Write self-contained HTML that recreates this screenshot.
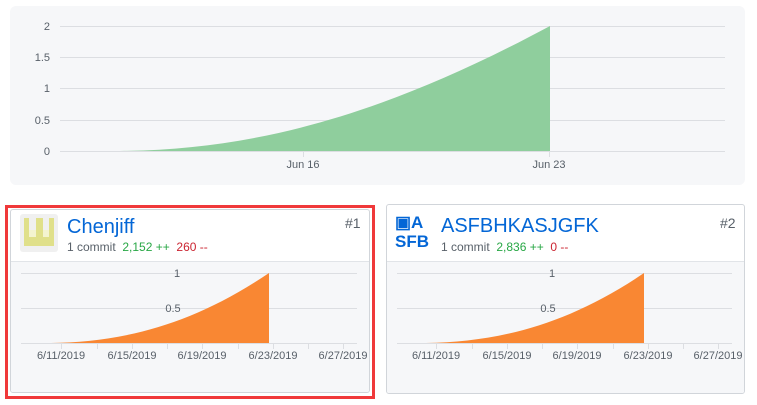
<!DOCTYPE html>
<html><head><meta charset="utf-8"><style>
body{margin:0;width:757px;height:405px;background:#fff;font-family:"Liberation Sans",sans-serif;position:relative;overflow:hidden}
.abs{position:absolute}
.card{position:absolute;border:1px solid #d1d5da;border-radius:3px;background:#fff;overflow:hidden}
.name{position:absolute;font-size:20px;color:#0366d6}
.stats{position:absolute;font-size:12px;color:#586069;white-space:nowrap}
.g{color:#28a745}.r{color:#cb2431}
.rank{position:absolute;font-size:14px;color:#586069}
</style></head><body>
<div class="abs" style="left:10px;top:6px;width:735px;height:179px;background:#f6f7f9;border-radius:6px"></div>
<svg class="abs" style="left:0;top:0" width="757" height="190" font-family="Liberation Sans, sans-serif" font-size="11" fill="#586069">
<g stroke="#dcdee2" stroke-width="1">
<line x1="60" y1="26.5" x2="725" y2="26.5"/><line x1="60" y1="57.5" x2="725" y2="57.5"/><line x1="60" y1="88.5" x2="725" y2="88.5"/><line x1="60" y1="120.5" x2="725" y2="120.5"/><line x1="60" y1="151.5" x2="725" y2="151.5"/>
<line x1="303.5" y1="151" x2="303.5" y2="157"/><line x1="549.5" y1="151" x2="549.5" y2="157"/>
</g>
<path d="M120,151 C260,150 390,112 550,26 L550,151 Z" fill="#8fce9d"/>
<g text-anchor="end"><text x="50" y="30">2</text><text x="50" y="61">1.5</text><text x="50" y="92">1</text><text x="50" y="124">0.5</text><text x="50" y="155">0</text></g>
<g text-anchor="middle"><text x="303" y="168">Jun 16</text><text x="549" y="168">Jun 23</text></g>
</svg>

<div class="abs" style="left:5px;top:205px;width:364px;height:188px;border:3px solid #f0393a"></div>
<div class="card" style="left:10px;top:209px;width:358px;height:182px">
<div style="position:absolute;left:0;top:51px;width:100%;height:131px;background:#f6f7f9;border-top:1px solid #e1e4e8"></div>
<div style="position:absolute;left:9px;top:4px;width:38px;height:38px;background:#f0f0f0;border-radius:3px">
<svg width="38" height="38"><g fill="#e0e08a"><rect x="4" y="4" width="5" height="12"/><rect x="16" y="4" width="7" height="12"/><rect x="29" y="4" width="5" height="12"/><rect x="4" y="16" width="30" height="16"/></g><g fill="#f4f4d0"><rect x="9" y="16" width="7" height="7"/><rect x="23" y="16" width="6" height="7"/></g></svg></div>
<div class="name" style="left:56px;top:6px">Chenjiff</div>
<div class="stats" style="left:56px;top:30px">1 commit &nbsp;<span class="g">2,152 ++</span> &nbsp;<span class="r">260 --</span></div>
<div class="rank" style="left:334px;top:5px">#1</div>
<svg class="abs" style="left:0;top:46px" width="356" height="110" viewBox="10 0 356 110" font-family="Liberation Sans, sans-serif" font-size="11" fill="#586069">
<g stroke="#dcdee2">
<line x1="20" y1="17.5" x2="356" y2="17.5"/><line x1="20" y1="52.5" x2="356" y2="52.5"/><line x1="20" y1="87.5" x2="356" y2="87.5"/>
<path d="M60.5,87v6M96.5,87v6M131.5,87v6M166.5,87v6M201.5,87v6M237.5,87v6M272.5,87v6M307.5,87v6M342.5,87v6"/>
</g>
<path d="M50,87 C120,86 190,70 268,17 L268,87 Z" fill="#f98733"/>
<g text-anchor="middle"><text x="176" y="21">1</text><text x="172" y="56">0.5</text>
<text x="60" y="103">6/11/2019</text><text x="131" y="103">6/15/2019</text><text x="201" y="103">6/19/2019</text><text x="272" y="103">6/23/2019</text><text x="342" y="103">6/27/2019</text></g>
</svg>
</div>
<div class="card" style="left:386px;top:204px;width:357px;height:188px">
<div style="position:absolute;left:0;top:56px;width:100%;height:132px;background:#f6f7f9;border-top:1px solid #e1e4e8"></div>
<div style="position:absolute;left:8px;top:8px;font-size:17px;font-weight:bold;color:#0366d6;line-height:19px;width:40px">&#9635;A<br>SFB</div>
<div class="name" style="left:54px;top:10px">ASFBHKASJGFK</div>
<div class="stats" style="left:54px;top:35px">1 commit &nbsp;<span class="g">2,836 ++</span> &nbsp;<span class="r">0 --</span></div>
<div class="rank" style="left:333px;top:10px">#2</div>
<svg class="abs" style="left:0;top:51px" width="355" height="110" viewBox="387 0 355 110" font-family="Liberation Sans, sans-serif" font-size="11" fill="#586069">
<g stroke="#dcdee2">
<line x1="397" y1="17.5" x2="732" y2="17.5"/><line x1="397" y1="52.5" x2="732" y2="52.5"/><line x1="397" y1="87.5" x2="732" y2="87.5"/>
<path d="M436.5,87v6M472.5,87v6M507.5,87v6M542.5,87v6M577.5,87v6M613.5,87v6M648.5,87v6M683.5,87v6M718.5,87v6"/>
</g>
<path d="M426,87 C496,86 566,70 644,17 L644,87 Z" fill="#f98733"/>
<g text-anchor="middle"><text x="552" y="21">1</text><text x="548" y="56">0.5</text>
<text x="436" y="103">6/11/2019</text><text x="507" y="103">6/15/2019</text><text x="577" y="103">6/19/2019</text><text x="648" y="103">6/23/2019</text><text x="718" y="103">6/27/2019</text></g>
</svg>
</div>
</body></html>
